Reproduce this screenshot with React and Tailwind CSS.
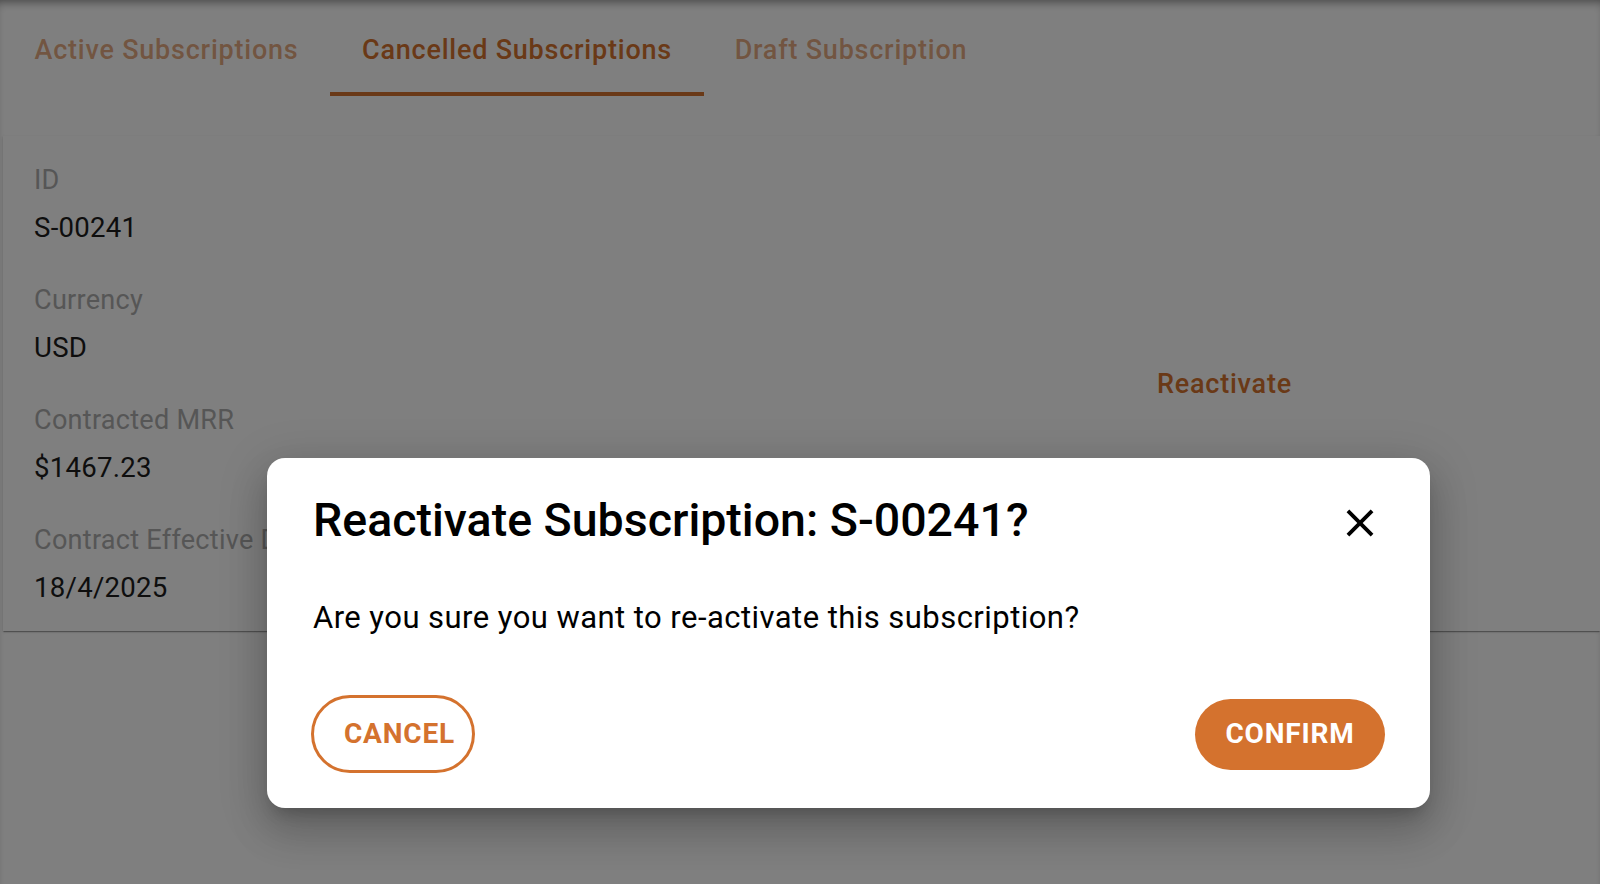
import React from "react";

function Field({ label, value }) {
  return (
    <div className="flex flex-col">
      <div className="text-[27.1px] leading-[48px] tracking-[0.25px] text-[#adadad] whitespace-nowrap">{label}</div>
      <div className="text-[27.6px] leading-[48px] tracking-[0.25px] text-[#1c1c1c] whitespace-nowrap">{value}</div>
    </div>
  );
}

export default function App() {
  return (
    <div className="relative h-[884px] w-full overflow-hidden bg-white font-['Roboto',_'Noto_Sans',_sans-serif] shadow-[inset_0_7px_10px_-5px_rgba(0,0,0,0.45)]">
      <div className="pl-[3px]">
        <nav className="flex h-[96px] pt-[4px]">
          <button className="flex h-full w-[327px] items-center justify-center text-[27px] font-medium tracking-[0.77px] text-[#d4722e]/60">
            Active Subscriptions
          </button>
          <button className="relative flex h-full w-[374px] items-center justify-center text-[27px] font-medium tracking-[0.77px] text-[#d4722e]">
            Cancelled Subscriptions
            <span className="absolute bottom-0 left-0 right-0 h-[4px] bg-[#d4722e]" />
          </button>
          <button className="flex h-full w-[294px] items-center justify-center text-[27px] font-medium tracking-[0.77px] text-[#d4722e]/60">
            Draft Subscription
          </button>
        </nav>

        <div className="mt-[40px] flex items-center bg-white pb-[19px] pt-[20px] shadow-[0_2px_1px_-1px_rgba(0,0,0,0.2),0_1px_1px_0_rgba(0,0,0,0.14),0_1px_3px_0_rgba(0,0,0,0.12)]">
          <div className="flex w-[1154px] flex-col gap-[24px] pl-[31px]">
            <Field label="ID" value="S-00241" />
            <Field label="Currency" value="USD" />
            <Field label="Contracted MRR" value="$1467.23" />
            <Field label="Contract Effective Date" value="18/4/2025" />
          </div>
          <button className="text-[27px] font-medium tracking-[0.77px] text-[#d4722e]">Reactivate</button>
        </div>
      </div>

      {/* backdrop */}
      <div className="absolute inset-0 bg-black/50" />

      {/* dialog */}
      <div className="absolute left-[267px] top-[458px] w-[1163px] rounded-[18px] bg-white pb-[35px] pl-[46px] pr-[45px] pt-[35px] shadow-[0_11px_15px_-7px_rgba(0,0,0,0.2),0_24px_38px_3px_rgba(0,0,0,0.14),0_9px_46px_8px_rgba(0,0,0,0.12)]">
        <div className="flex h-[54px] items-center justify-between">
          <h2 className="whitespace-nowrap text-[46.5px] font-medium leading-[54px] text-black">
            Reactivate Subscription: S-00241?
          </h2>
          <button className="mr-[2px] mt-[6px] text-black" aria-label="close">
            <svg width="46" height="46" viewBox="0 0 24 24" fill="currentColor">
              <path d="M19 6.41 17.59 5 12 10.59 6.41 5 5 6.41 10.59 12 5 17.59 6.41 19 12 13.41 17.59 19 19 17.59 13.41 12z" />
            </svg>
          </button>
        </div>
        <p className="mt-[53px] whitespace-nowrap text-[31px] leading-[36px] tracking-[0.45px] text-black">
          Are you sure you want to re-activate this subscription?
        </p>
        <div className="mt-[59px] flex items-center justify-between">
          <button className="-ml-[2px] flex h-[78px] items-center rounded-full border-[3px] border-[#d4722e] pl-[30px] pr-[17px] text-[28px] font-bold tracking-[0.8px] text-[#d4722e]">
            CANCEL
          </button>
          <button className="flex h-[71px] w-[190px] items-center justify-center rounded-full bg-[#d4722e] text-[28px] font-bold tracking-[0.8px] text-white">
            CONFIRM
          </button>
        </div>
      </div>
    </div>
  );
}
